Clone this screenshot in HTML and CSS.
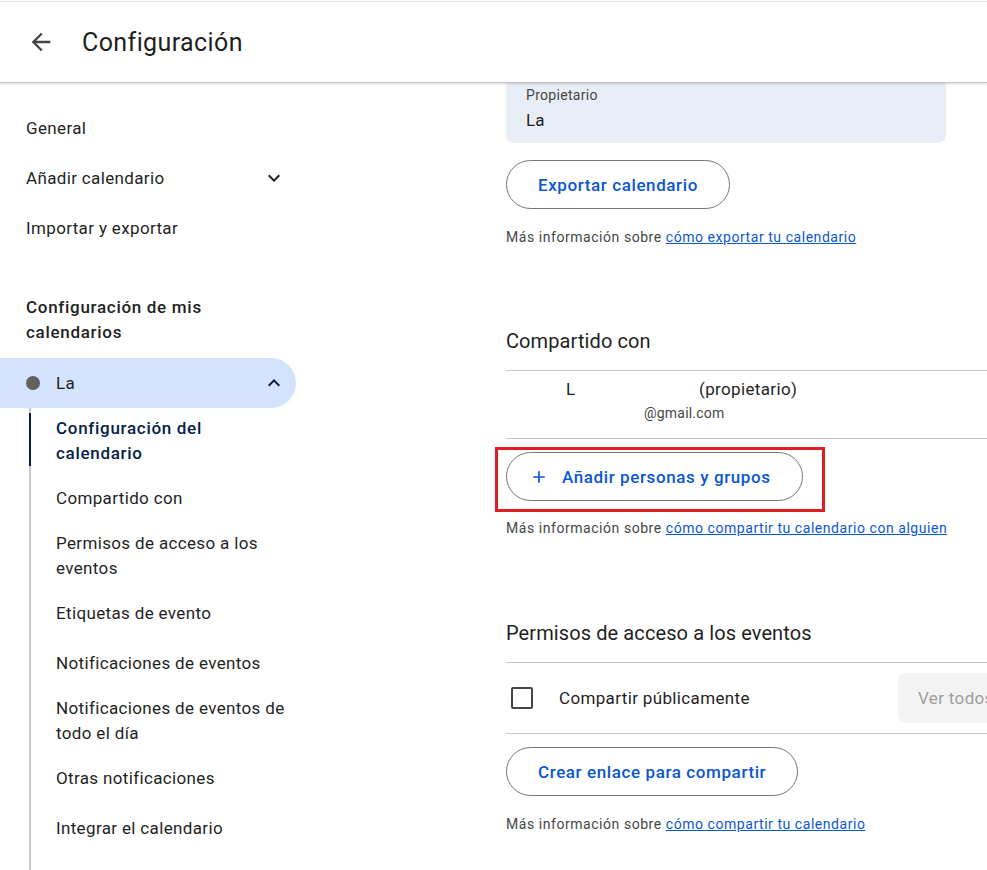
FILE: index.html
```html
<!DOCTYPE html>
<html lang="es">
<head>
    <meta charset="UTF-8">
    <meta name="viewport" content="width=device-width, initial-scale=1.0">
    <title>Configuración</title>
    <link rel="stylesheet" href="styles.css">
</head>
<body>
    <header class="topbar">
        <button class="back-btn" type="button" aria-label="Atrás">
            <svg width="28" height="28" viewBox="0 0 24 24"><path d="M20 11H7.83l5.59-5.59L12 4l-8 8 8 8 1.41-1.41L7.83 13H20v-2z" fill="#444746"/></svg>
        </button>
        <h1>Configuración</h1>
    </header>

    <div class="layout">
        <nav class="sidebar">
            <a class="nav-item">General</a>
            <a class="nav-item">Añadir calendario
                <svg width="24" height="24" viewBox="0 0 24 24"><path d="M16.59 8.59L12 13.17 7.41 8.59 6 10l6 6 6-6z" fill="#1f1f1f"/></svg>
            </a>
            <a class="nav-item">Importar y exportar</a>

            <h2 class="nav-heading">Configuración de mis<br>calendarios</h2>

            <div class="cal-pill">
                <span class="cal-dot"></span>
                <span class="cal-name">La</span>
                <svg width="24" height="24" viewBox="0 0 24 24"><path d="M12 8l-6 6 1.41 1.41L12 10.83l4.59 4.58L18 14z" fill="#041e49"/></svg>
            </div>

            <ul class="sub-list">
                <li class="sub-item active">Configuración del<br>calendario</li>
                <li class="sub-item">Compartido con</li>
                <li class="sub-item">Permisos de acceso a los<br>eventos</li>
                <li class="sub-item">Etiquetas de evento</li>
                <li class="sub-item">Notificaciones de eventos</li>
                <li class="sub-item">Notificaciones de eventos de<br>todo el día</li>
                <li class="sub-item">Otras notificaciones</li>
                <li class="sub-item">Integrar el calendario</li>
            </ul>
        </nav>

        <main class="content">
            <div class="owner-box">
                <div class="owner-label">Propietario</div>
                <div class="owner-name">La</div>
            </div>

            <button class="outline-btn export-btn" type="button">Exportar calendario</button>
            <p class="help">Más información sobre <a href="#">cómo exportar tu calendario</a></p>

            <h2 class="section-title">Compartido con</h2>
            <div class="member-row">
                <div><span class="member-name">L</span>(propietario)</div>
                <div class="member-email">@gmail.com</div>
            </div>

            <div class="highlight">
                <button class="outline-btn" type="button">
                    <svg width="20" height="20" viewBox="0 0 24 24"><path d="M19 13h-6v6h-2v-6H5v-2h6V5h2v6h6v2z" fill="#0b57d0"/></svg>
                    Añadir personas y grupos
                </button>
            </div>
            <p class="help help-tight">Más información sobre <a href="#">cómo compartir tu calendario con alguien</a></p>

            <h2 class="section-title section-gap">Permisos de acceso a los eventos</h2>
            <div class="public-row">
                <span class="checkbox"></span>
                <span class="public-label">Compartir públicamente</span>
                <span class="select-disabled">Ver todos los detalles de los eventos</span>
            </div>

            <button class="outline-btn link-btn" type="button">Crear enlace para compartir</button>
            <p class="help">Más información sobre <a href="#">cómo compartir tu calendario</a></p>
        </main>
    </div>
</body>
</html>
```

FILE: styles.css
```css
body {
    margin: 0;
    padding-top: 1px;
    font-family: Roboto, "Liberation Sans", sans-serif;
    color: #1f1f1f;
    overflow: hidden;
    background: #fff;
}

/* header */
.topbar {
    display: flex;
    align-items: center;
    height: 80px;
    border-top: 1px solid #e3e3e3;
    border-bottom: 1px solid #c4c4c4;
    box-shadow: 0 1px 2px rgba(0, 0, 0, 0.15);
    position: relative;
    z-index: 1;
}
.back-btn {
    display: flex;
    margin-left: 27px;
    padding: 0;
    border: none;
    background: none;
}
.topbar h1 {
    margin: 0 0 0 27px;
    font-size: 25px;
    font-weight: 400;
    letter-spacing: 0.4px;
}

.layout {
    display: flex;
}

/* sidebar */
.sidebar {
    width: 296px;
    flex-shrink: 0;
    padding-top: 20px;
    font-size: 17px;
    letter-spacing: 0.35px;
}
.nav-item {
    display: flex;
    align-items: center;
    justify-content: space-between;
    height: 50px;
    padding: 0 10px 0 26px;
}
.nav-heading {
    margin: 0;
    padding: 42px 0 13px 26px;
    font-size: 17px;
    font-weight: 500;
    line-height: 25px;
    letter-spacing: 0.7px;
}
.cal-pill {
    display: flex;
    align-items: center;
    height: 50px;
    padding: 0 10px 0 26px;
    background: #d3e3fd;
    border-radius: 0 25px 25px 0;
}
.cal-dot {
    width: 14px;
    height: 14px;
    border-radius: 50%;
    background: #616161;
}
.cal-name {
    flex: 1;
    margin-left: 16px;
}
.sub-list {
    list-style: none;
    margin: 0 0 0 29px;
    padding: 0 0 30px 25px;
    border-left: 2px solid #c7c7c7;
}
.sub-item {
    position: relative;
    display: flex;
    align-items: center;
    min-height: 50px;
    padding: 7.5px 0;
    box-sizing: border-box;
    line-height: 25px;
}
.sub-item.active {
    color: #041e49;
    font-weight: 500;
    letter-spacing: 0.7px;
}
.sub-item.active::before {
    content: "";
    position: absolute;
    left: -27px;
    top: 5px;
    bottom: 7px;
    width: 2px;
    background: #041e49;
}

/* main column */
.content {
    width: 600px;
    flex-shrink: 0;
    padding-left: 210px;
}
.owner-box {
    width: 440px;
    box-sizing: border-box;
    padding: 2px 20px 11px;
    background: #e9edf5;
    border-radius: 0 0 8px 8px;
}
.owner-label {
    font-size: 14px;
    line-height: 20px;
    color: #444746;
    letter-spacing: 0.3px;
}
.owner-name {
    margin-top: 3px;
    font-size: 17px;
    line-height: 24px;
}
.outline-btn {
    display: inline-flex;
    align-items: center;
    height: 49px;
    padding: 0 31px;
    border: 1px solid #747775;
    border-radius: 25px;
    background: #fff;
    color: #0b57d0;
    font-family: inherit;
    font-size: 17px;
    font-weight: 500;
    letter-spacing: 0.6px;
}
.outline-btn svg {
    margin: 0 13px 0 -9px;
}
.export-btn {
    margin-top: 17px;
}
.link-btn {
    margin-top: 13px;
}
.help {
    margin: 18px 0 0;
    font-size: 14px;
    line-height: 20px;
    color: #444746;
    letter-spacing: 0.55px;
}
.help a {
    color: #0b57d0;
}
.help-tight {
    margin-top: 6px;
}
.section-title {
    margin: 80px 0 0;
    padding-bottom: 15px;
    border-bottom: 1px solid #c7c7c7;
    font-size: 20px;
    font-weight: 400;
    line-height: 28px;
    color: #1f1f1f;
    letter-spacing: 0.1px;
}
.section-gap {
    margin-top: 81px;
}
.member-row {
    padding: 6px 0 15px 60px;
    border-bottom: 1px solid #c7c7c7;
    font-size: 17px;
    line-height: 24px;
    letter-spacing: 0.35px;
}
.member-name {
    display: inline-block;
    width: 133px;
}
.member-email {
    margin-top: 2px;
    padding-left: 78px;
    font-size: 14px;
    line-height: 20px;
    color: #444746;
    letter-spacing: 0.2px;
}
.highlight {
    display: inline-block;
    margin: 8px 0 0 -11px;
    padding: 2px 19px 8px 8px;
    border: 3px solid #e31b23;
}
.public-row {
    display: flex;
    align-items: center;
    height: 70px;
    border-bottom: 1px solid #c7c7c7;
    font-size: 17px;
    letter-spacing: 0.35px;
    white-space: nowrap;
}
.checkbox {
    width: 18px;
    height: 18px;
    margin-left: 5px;
    border: 2px solid #444746;
    border-radius: 2px;
}
.public-label {
    margin-left: 26px;
}
.select-disabled {
    margin-left: auto;
    width: 208px;
    height: 50px;
    box-sizing: border-box;
    padding-left: 20px;
    line-height: 50px;
    overflow: hidden;
    border-radius: 8px;
    background: #f3f3f3;
    color: #9e9e9e;
}
```
